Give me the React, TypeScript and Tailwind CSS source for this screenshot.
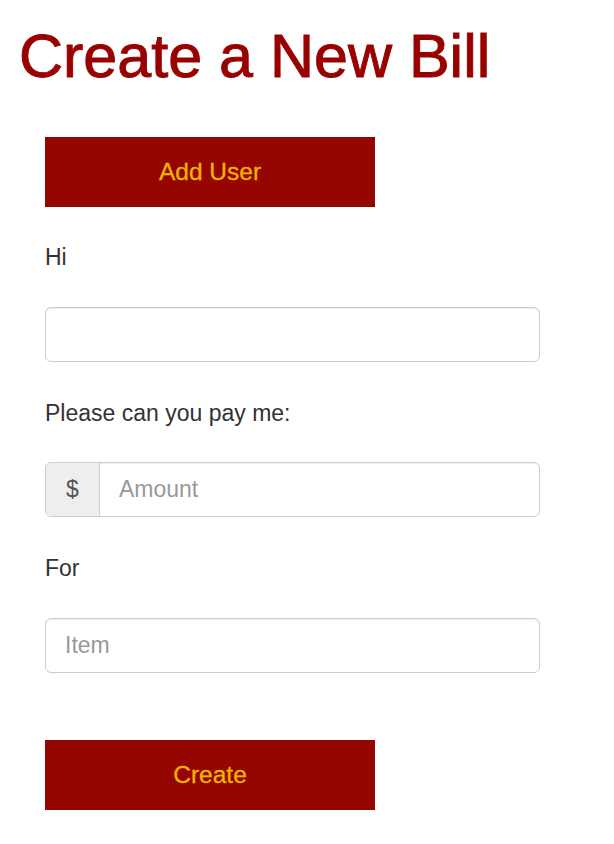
import React from "react";

export default function App() {
  const font = { fontFamily: '"Liberation Sans", Arial, Helvetica, sans-serif' };
  return (
    <div className="min-h-[844px] w-[614px] bg-white" style={font}>
      <h1 className="pl-[19px] pt-[23px] text-[61px] leading-[66px] font-normal text-[#990000] [-webkit-text-stroke:1px_#990000]">
        Create a New Bill
      </h1>
      <div className="pl-[45px] w-[540px] flex flex-col">
        <button className="mt-[48px] w-[330px] h-[70px] bg-[#960600] text-[#f0b400] text-[24.5px] leading-none [-webkit-text-stroke:0.3px_#f0b400]">
          Add User
        </button>
        <label className="mt-[34px] text-[23px] leading-[32px] text-[#333333]">Hi</label>
        <input
          className="mt-[34px] h-[55px] w-full rounded-[6px] border border-[#cccccc] shadow-[inset_0_1px_1px_rgba(0,0,0,0.075)] px-[19px] text-[23px] text-[#555555] outline-none"
          style={font}
        />
        <label className="mt-[35px] text-[23px] leading-[32px] text-[#333333]">Please can you pay me:</label>
        <div className="mt-[33px] flex h-[55px] w-full rounded-[6px] border border-[#cccccc] overflow-hidden shadow-[inset_0_1px_1px_rgba(0,0,0,0.075)]">
          <span className="flex w-[54px] items-center justify-center bg-[#eeeeee] border-r border-[#cccccc] text-[23px] text-[#555555]">
            $
          </span>
          <input
            placeholder="Amount"
            className="flex-1 px-[19px] text-[23px] text-[#555555] placeholder:text-[#999999] outline-none"
            style={font}
          />
        </div>
        <label className="mt-[35px] text-[23px] leading-[32px] text-[#333333]">For</label>
        <input
          placeholder="Item"
          className="mt-[34px] h-[55px] w-full rounded-[6px] border border-[#cccccc] shadow-[inset_0_1px_1px_rgba(0,0,0,0.075)] px-[19px] text-[23px] text-[#555555] placeholder:text-[#999999] outline-none"
          style={font}
        />
        <button className="mt-[67px] w-[330px] h-[70px] bg-[#960600] text-[#f0b400] text-[24.5px] leading-none [-webkit-text-stroke:0.3px_#f0b400]">
          Create
        </button>
      </div>
    </div>
  );
}
